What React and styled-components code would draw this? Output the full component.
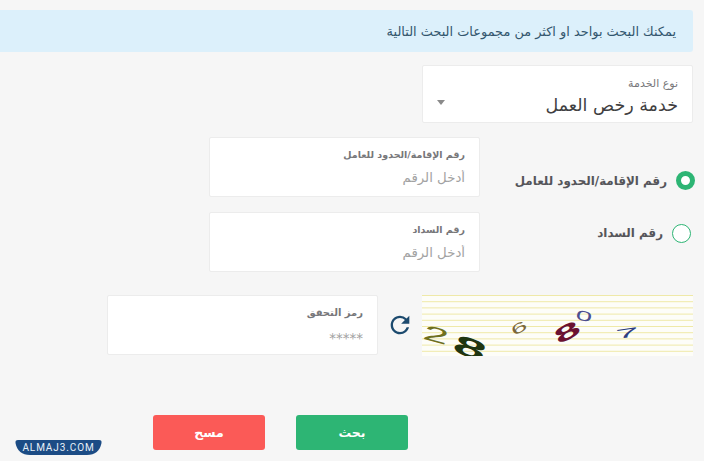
import React, { useState } from 'react';
import styled, { createGlobalStyle } from 'styled-components';
import { MdRefresh } from 'react-icons/md';

const GlobalStyle = createGlobalStyle`
    html, body {
        margin: 0;
        padding: 0;
        background-color: #f6f6f6;
        font-family: "DejaVu Sans", "Noto Sans", sans-serif;
    }
`;

const Page = styled.div`
    position: relative;
    box-sizing: border-box;
    width: 704px;
    height: 461px;
    overflow: hidden;
    padding: 10px 11px 0 0;
    direction: rtl;
`;

const Alert = styled.div`
    height: 42px;
    display: flex;
    align-items: center;
    padding-right: 17px;
    background-color: #dcf0fb;
    border-radius: 0 3px 3px 0;
    color: #33566e;
    font-size: 12.9px;
`;

const Card = styled.div`
    box-sizing: border-box;
    flex: none;
    width: 271px;
    height: ${(props) => props.$height || 60}px;
    padding: 10px 14px 0;
    background-color: #fff;
    border: 1px solid #ececec;
    border-radius: 2px;
    display: flex;
    flex-direction: column;
`;

const SelectCard = styled(Card)`
    position: relative;
    margin: 13px 0 14px;
    padding-top: 11px;
`;

const SmallLabel = styled.span`
    font-size: ${(props) => props.$size || 9.5}px;
    font-weight: ${(props) => props.$weight || 700};
    color: #77777a;
    line-height: 14px;
`;

const SelectValue = styled.span`
    font-size: 17.5px;
    line-height: 20px;
    margin-top: 4px;
    color: #3f3f42;
`;

const Caret = styled.span`
    position: absolute;
    left: 14px;
    top: 34px;
    border-style: solid;
    border-width: 5px 4px 0;
    border-color: #8a8a8a transparent transparent;
`;

const Placeholder = styled.input`
    border: none;
    outline: none;
    padding: 0;
    margin-top: ${(props) => props.$top || 6}px;
    background: transparent;
    font: inherit;
    font-size: ${(props) => props.$size || 13.3}px;
    line-height: 20px;
    color: #9c9c9c;
    &::placeholder {
        color: #a2a2a2;
        opacity: 1;
    }
`;

const OptionRow = styled.div`
    display: flex;
    align-items: center;
    margin-bottom: 15px;
`;

const RadioLabel = styled.label`
    box-sizing: border-box;
    width: 213px;
    display: flex;
    align-items: center;
    gap: 9px;
    padding-top: ${(props) => props.$top || 0}px;
    padding-bottom: ${(props) => props.$bottom || 0}px;
    font-size: 11.9px;
    font-weight: 700;
    color: #55555a;
    cursor: pointer;
    white-space: nowrap;
`;

const RadioMark = styled.span`
    box-sizing: border-box;
    flex: none;
    width: 19px;
    height: 19px;
    border-radius: 50%;
    margin-right: ${(props) => (props.$checked ? -2 : 2)}px;
    border: ${(props) => (props.$checked ? '5px solid #2db574' : '1px solid #2db574')};
    background-color: #fff;
`;

const CaptchaRow = styled.div`
    display: flex;
    align-items: flex-start;
    margin-top: 23px;
`;

const CaptchaImage = styled.svg`
    flex: none;
    display: block;
    width: 271px;
    height: 61px;
    background-color: #fdfdf8;
`;

const RefreshButton = styled.button`
    flex: none;
    width: 44px;
    height: 60px;
    display: flex;
    align-items: center;
    justify-content: center;
    padding: 0;
    border: none;
    background: transparent;
    color: #1c4a6e;
    font-size: 28px;
    cursor: pointer;
`;

const Actions = styled.div`
    display: flex;
    gap: 31px;
    margin: 59px 285px 0 0;
`;

const ActionButton = styled.button`
    width: 112px;
    height: 35px;
    border: none;
    border-radius: 3px;
    background-color: ${(props) => props.$color};
    color: #fff;
    font: inherit;
    font-size: 12.5px;
    font-weight: 700;
    cursor: pointer;
`;

const Logo = styled.svg`
    position: absolute;
    left: 15px;
    top: 440px;
    width: 87px;
    height: 16px;
`;

const captchaLines = Array.from({ length: 10 }, (_, i) => 0.5 + i * 6.2);

// digits of the captcha are stretched wide and tilted
const captchaDigits = [
    { text: '2', x: 14, y: 40, size: 20, sx: 2.3, sy: 1.05, angle: 15, color: '#6f701f' },
    { text: '8', x: 48, y: 53, size: 24, sx: 2.5, sy: 1.1, angle: 20, color: '#1f3510', bold: true },
    { text: '6', x: 97, y: 33, size: 14, sx: 2.1, sy: 1, angle: -30, color: '#7b683c' },
    { text: '8', x: 145, y: 37, size: 20, sx: 2.4, sy: 1.05, angle: -28, color: '#6b1230', bold: true },
    { text: '0', x: 162, y: 21, size: 14, sx: 2.1, sy: 1, angle: 12, color: '#4d4f8f' },
    { text: '7', x: 205, y: 38, size: 16, sx: 2.6, sy: 0.8, angle: -8, color: '#2e3f80' },
];

function Captcha() {
    return (
        <CaptchaImage viewBox="0 0 271 61" dir="ltr">
            {captchaLines.map((y) => (
                <line key={y} x1="0" x2="271" y1={y} y2={y} stroke="#efe9a8" strokeWidth="1" />
            ))}
            {captchaDigits.map((d) => (
                <text
                    key={d.x}
                    fontSize={d.size}
                    fontFamily="Liberation Sans, sans-serif"
                    fontWeight={d.bold ? 700 : 400}
                    fill={d.color}
                    textAnchor="middle"
                    dominantBaseline="central"
                    transform={`translate(${d.x} ${d.y}) rotate(${d.angle}) scale(${d.sx} ${d.sy})`}
                >
                    {d.text}
                </text>
            ))}
        </CaptchaImage>
    );
}

function App() {
    const [searchBy, setSearchBy] = useState('residence');

    return (
        <Page>
            <GlobalStyle />
            <Alert>يمكنك البحث بواحد او اكثر من مجموعات البحث التالية</Alert>

            <SelectCard $height={58}>
                <SmallLabel $size={11} $weight={400}>نوع الخدمة</SmallLabel>
                <SelectValue>خدمة رخص العمل</SelectValue>
                <Caret />
            </SelectCard>

            <OptionRow>
                <RadioLabel $top={27} onClick={() => setSearchBy('residence')}>
                    <RadioMark $checked={searchBy === 'residence'} />
                    رقم الإقامة/الحدود للعامل
                </RadioLabel>
                <Card>
                    <SmallLabel>رقم الإقامة/الحدود للعامل</SmallLabel>
                    <Placeholder placeholder="أدخل الرقم" />
                </Card>
            </OptionRow>

            <OptionRow>
                <RadioLabel $bottom={18} onClick={() => setSearchBy('payment')}>
                    <RadioMark $checked={searchBy === 'payment'} />
                    رقم السداد
                </RadioLabel>
                <Card>
                    <SmallLabel>رقم السداد</SmallLabel>
                    <Placeholder placeholder="أدخل الرقم" />
                </Card>
            </OptionRow>

            <CaptchaRow>
                <Captcha />
                <RefreshButton aria-label="refresh">
                    <MdRefresh />
                </RefreshButton>
                <Card>
                    <SmallLabel $size={10}>رمز التحقق</SmallLabel>
                    <Placeholder $size={13.5} $top={8} placeholder="*****" />
                </Card>
            </CaptchaRow>

            <Actions>
                <ActionButton $color="#2db574">بحث</ActionButton>
                <ActionButton $color="#fb5a57">مسح</ActionButton>
            </Actions>

            <Logo viewBox="0 0 87 16">
                <path d="M3 0H84Q87 0 86.5 3C85 11 80 15 72 15H15C7 15 2 11 .5 3Q0 0 3 0Z" fill="#1c4c85" />
                <text x="43.5" y="10.5" fontSize="10" fontFamily="Roboto, sans-serif" letterSpacing="0.9" fill="#e8f0f8" textAnchor="middle">ALMAJ3.COM</text>
            </Logo>
        </Page>
    );
}

export default App;
